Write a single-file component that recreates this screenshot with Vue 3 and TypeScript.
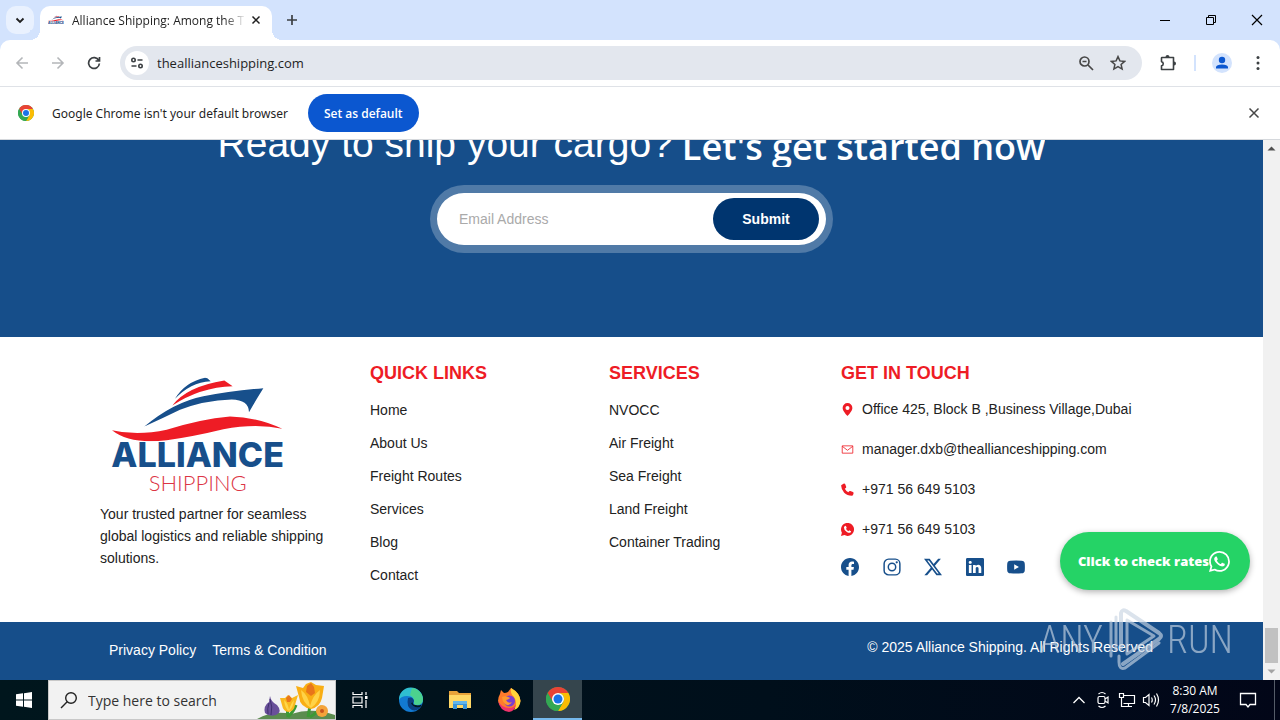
<script setup lang="ts">
import { ref } from 'vue'

interface ContactLine {
  icon: string
  text: string
  href: string
}

const address = ref('theallianceshipping.com')
const email = ref('')
const query = ref('')

const quickLinks: string[] = ['Home', 'About Us', 'Freight Routes', 'Services', 'Blog', 'Contact']
const services: string[] = ['NVOCC', 'Air Freight', 'Sea Freight', 'Land Freight', 'Container Trading']
const contacts: ContactLine[] = [
  { icon: 'i-pin', text: 'Office 425, Block B ,Business Village,Dubai', href: '#office' },
  { icon: 'i-mail', text: 'manager.dxb@theallianceshipping.com', href: '#mail' },
  { icon: 'i-phone', text: '+971 56 649 5103', href: '#phone' },
  { icon: 'i-wa-solid', text: '+971 56 649 5103', href: '#whatsapp' },
]
const socials: { icon: string; name: string }[] = [
  { icon: 'i-facebook', name: 'Facebook' },
  { icon: 'i-instagram', name: 'Instagram' },
  { icon: 'i-x', name: 'X' },
  { icon: 'i-linkedin', name: 'LinkedIn' },
  { icon: 'i-youtube', name: 'YouTube' },
]
</script>

<template>
  <div class="desktop">
    <svg class="defs" aria-hidden="true">
      <symbol id="i-ship" viewBox="66 80 516 192">
        <path fill="#174f8b" d="M255 145Q285 95 345 82L352 83L362 92Q300 96 255 145Z" />
        <path fill="#ee1c25" d="M247 165Q290 108 403 90L428 107Q330 110 247 165Z" />
        <path fill="#174f8b" d="M163 228Q250 155 340 137Q420 121 520 113Q498 148 477 185Q476 148 425 147Q340 150 270 178Q215 205 163 228Z" />
        <path fill="#ee1c25" d="M66 239Q140 257 230 238Q330 206 420 198Q505 200 577 235Q500 218 400 236Q310 258 230 269Q120 282 66 239Z" />
      </symbol>
      <symbol id="i-chrome" viewBox="0 0 48 48">
        <circle cx="24" cy="24" r="24" fill="#34a853" />
        <path fill="#ea4335" d="M3.2 12A24 24 0 0 1 44.8 12L24 13L14 30Z" />
        <path fill="#fbbc04" d="M44.8 12A24 24 0 0 1 24 48L34.4 30A12 12 0 0 0 24 12Z" />
        <path fill="#34a853" d="M3.2 12L13.6 30Q17 36 24 36L34.4 30L24 48A24 24 0 0 1 3.2 12Z" />
        <circle cx="24" cy="24" r="12" fill="#fff" />
        <circle cx="24" cy="24" r="9" fill="#1a73e8" />
      </symbol>
      <symbol id="i-wa" viewBox="0 0 16 16">
        <path fill="currentColor" d="M13.601 2.326A7.85 7.85 0 0 0 7.994 0C3.627 0 .068 3.558.064 7.926c0 1.399.366 2.76 1.057 3.965L0 16l4.204-1.102a7.9 7.9 0 0 0 3.79.965h.004c4.368 0 7.926-3.558 7.93-7.93A7.9 7.9 0 0 0 13.6 2.326zM7.994 14.521a6.6 6.6 0 0 1-3.356-.92l-.24-.144-2.494.654.666-2.433-.156-.251a6.56 6.56 0 0 1-1.007-3.505c0-3.626 2.957-6.584 6.591-6.584a6.56 6.56 0 0 1 4.66 1.931 6.56 6.56 0 0 1 1.928 4.66c-.004 3.639-2.961 6.592-6.592 6.592m3.615-4.934c-.197-.099-1.17-.578-1.353-.646-.182-.065-.315-.099-.445.099-.133.197-.513.646-.627.775-.114.133-.232.148-.43.05-.197-.1-.836-.308-1.592-.985-.59-.525-.985-1.175-1.103-1.372-.114-.198-.011-.304.088-.403.087-.088.197-.232.296-.346.1-.114.133-.198.198-.33.065-.134.034-.248-.015-.347-.05-.099-.445-1.076-.612-1.47-.16-.389-.323-.335-.445-.34-.114-.007-.247-.007-.38-.007a.73.73 0 0 0-.529.247c-.182.198-.691.677-.691 1.654s.71 1.916.81 2.049c.098.133 1.394 2.132 3.383 2.992.47.205.84.326 1.129.418.475.152.904.129 1.246.08.38-.058 1.171-.48 1.338-.943.164-.464.164-.86.114-.943-.049-.084-.182-.133-.38-.232" />
      </symbol>
      <symbol id="i-wa-solid" viewBox="0 0 16 16">
        <path fill="currentColor" d="M0 16L1.1 11.9A8 8 0 1 1 4.2 14.9Z" />
        <path fill="#fff" d="M4.2 4.2Q5.6 2.6 6.2 4L7 5.8Q7.1 6.4 6.1 7.1Q7.2 9.3 9.2 10Q9.9 8.9 10.5 9.1L12.3 10Q12.7 10.6 11.7 11.7Q10 12.7 7.2 11Q3.3 8.3 3.6 5.6Z" />
      </symbol>
      <symbol id="i-pin" viewBox="0 0 16 16">
        <path fill="currentColor" fill-rule="evenodd" d="M8 0a6 6 0 0 0-6 6c0 3.500 4 7.500 6 10 2-2.500 6-6.500 6-10a6 6 0 0 0-6-6zm0 3.600a2.500 2.500 0 1 1 0 5 2.500 2.500 0 0 1 0-5z" />
      </symbol>
      <symbol id="i-mail" viewBox="0 0 16 16">
        <path fill="none" stroke="currentColor" d="M1.500 3.500h13v9h-13zM1.500 4l6.500 5 6.500-5" />
      </symbol>
      <symbol id="i-phone" viewBox="0 0 16 16">
        <path fill="currentColor" d="M.6 2.600L3.600.6Q4.600.3 5.100 1.300L6.400 4.500Q6.600 5.400 5.900 6L4.700 7Q6.300 10 9 11.400L10.100 10.100Q10.700 9.500 11.500 9.800L14.700 11.100Q15.600 11.500 15.500 12.500L14.800 14.800Q14.400 15.700 13.400 15.700Q7.500 15.600 3.900 11.900Q.3 8.200.2 3.500Q.2 3 .6 2.600Z" />
      </symbol>
      <symbol id="i-facebook" viewBox="0 0 16 16">
        <path fill="currentColor" d="M16 8.049c0-4.446-3.582-8.050-8-8.050C3.580 0-.002 3.603-.002 8.050c0 4.017 2.926 7.347 6.750 7.951v-5.625h-2.030V8.050H6.750V6.275c0-2.017 1.195-3.131 3.022-3.131.876 0 1.791.157 1.791.157v1.980h-1.009c-.993 0-1.303.621-1.303 1.258v1.510h2.218l-.354 2.326H9.250V16c3.824-.604 6.750-3.934 6.750-7.951" />
      </symbol>
      <symbol id="i-instagram" viewBox="0 0 16 16">
        <rect x="1" y="1" width="14" height="14" rx="4" fill="none" stroke="currentColor" stroke-width="1.300" />
        <circle cx="8" cy="8" r="3.300" fill="none" stroke="currentColor" stroke-width="1.300" />
        <circle cx="12.200" cy="3.800" r="1" fill="currentColor" />
      </symbol>
      <symbol id="i-x" viewBox="0 0 16 16">
        <path fill="currentColor" d="M12.600.75h2.454l-5.360 6.142L16 15.250h-4.937l-3.867-5.070-4.425 5.070H.316l5.733-6.570L0 .75h5.063l3.495 4.633L12.601.75Zm-.86 13.028h1.360L4.323 2.145H2.865z" />
      </symbol>
      <symbol id="i-linkedin" viewBox="0 0 16 16">
        <path fill="currentColor" d="M0 1.146C0 .513.526 0 1.175 0h13.650C15.474 0 16 .513 16 1.146v13.708c0 .633-.526 1.146-1.175 1.146H1.175C.526 16 0 15.487 0 14.854zm4.943 12.248V6.169H2.542v7.225zm-1.200-8.212c.837 0 1.358-.554 1.358-1.248-.015-.709-.52-1.248-1.342-1.248S2.400 3.226 2.400 3.934c0 .694.521 1.248 1.327 1.248zm4.908 8.212V9.359c0-.216.016-.432.080-.586.173-.431.568-.878 1.232-.878.869 0 1.216.662 1.216 1.634v3.865h2.401V9.250c0-2.220-1.184-3.252-2.764-3.252-1.274 0-1.845.7-2.165 1.193v.025h-.016l.016-.025V6.169h-2.400c.030.678 0 7.225 0 7.225z" />
      </symbol>
      <symbol id="i-youtube" viewBox="0 0 16 16">
        <path fill="currentColor" fill-rule="evenodd" d="M3 2.400Q8 2 13 2.400Q15.600 2.600 15.800 5Q16 8 15.800 11Q15.600 13.400 13 13.600Q8 14 3 13.600Q.4 13.400.2 11Q0 8 .2 5Q.4 2.600 3 2.400ZM6.400 5.600V10.400L10.600 8Z" />
      </symbol>
    </svg>

    <header class="tabstrip">
      <button class="tab-search" aria-label="Search tabs">
        <svg width="12" height="12" viewBox="0 0 12 12"><path d="M2.500 4.500L6 8l3.500-3.500" fill="none" stroke="#1f1f1f" stroke-width="1.800" /></svg>
      </button>
      <div class="tab">
        <svg class="favicon" viewBox="66 80 516 350" aria-hidden="true">
          <use href="#i-ship" x="66" y="80" width="516" height="192" />
          <text class="logo-name" x="66" y="360">ALLIANCE</text>
        </svg>
        <span class="tab-title">Alliance Shipping: Among the T</span>
        <button class="tab-close" aria-label="Close tab">
          <svg width="10" height="10" viewBox="0 0 10 10"><path d="M1.500 1.500l7 7m0-7l-7 7" stroke="#1f1f1f" stroke-width="1.500" /></svg>
        </button>
      </div>
      <button class="new-tab" aria-label="New tab">
        <svg width="12" height="12" viewBox="0 0 12 12"><path d="M6 1v10M1 6h10" stroke="#3c4043" stroke-width="1.700" /></svg>
      </button>
      <div class="window-buttons">
        <button aria-label="Minimize"><svg width="12" height="12" viewBox="0 0 12 12"><path d="M1 6.500h10" stroke="#000" /></svg></button>
        <button aria-label="Restore"><svg width="12" height="12" viewBox="0 0 12 12"><path d="M1.500 3.500h7v7h-7zM3.500 3.500v-2h7v7h-2" fill="none" stroke="#000" /></svg></button>
        <button aria-label="Close"><svg width="12" height="12" viewBox="0 0 12 12"><path d="M1 1l10 10M11 1L1 11" stroke="#000" stroke-width="1.200" /></svg></button>
      </div>
    </header>

    <div class="toolbar-back">
      <nav class="toolbar" aria-label="Browser toolbar">
        <button aria-label="Back" disabled>
          <svg width="14" height="14" viewBox="0 0 14 14"><path d="M13 7H2m5.500-5.500L2 7l5.500 5.500" fill="none" stroke="#b4b6b9" stroke-width="1.600" /></svg>
        </button>
        <button aria-label="Forward" disabled>
          <svg width="14" height="14" viewBox="0 0 14 14"><path d="M1 7h11M6.500 1.500L12 7l-5.500 5.500" fill="none" stroke="#b4b6b9" stroke-width="1.600" /></svg>
        </button>
        <button aria-label="Reload">
          <svg width="14" height="14" viewBox="0 0 14 14"><path d="M11.800 4.500A5.400 5.400 0 1 0 12.400 7.500M12.500 1v4h-4" fill="none" stroke="#3c4043" stroke-width="1.700" /></svg>
        </button>
        <div class="omnibox">
          <button class="site-info" aria-label="View site information">
            <svg width="14" height="14" viewBox="0 0 14 14" fill="none" stroke="#3c4043" stroke-width="1.600"><circle cx="3.500" cy="4" r="1.700" /><circle cx="10.500" cy="10" r="1.700" /><path d="M7.500 4h5M1.500 10h5" /></svg>
          </button>
          <input v-model="address" class="address" type="text" aria-label="Address bar" />
          <button aria-label="Zoom">
            <svg width="16" height="16" viewBox="0 0 16 16" fill="none" stroke="#474747" stroke-width="1.700"><circle cx="6.500" cy="6.500" r="4.500" /><path d="M10 10l5 5M4.500 6.500h4" /></svg>
          </button>
          <button aria-label="Bookmark this page">
            <svg width="16" height="16" viewBox="0 0 16 16"><path d="M8 1.600l1.900 4.300 4.700.5-3.500 3.100 1 4.600L8 11.700l-4.100 2.400 1-4.600-3.500-3.100 4.700-.5z" fill="none" stroke="#474747" stroke-width="1.500" /></svg>
          </button>
        </div>
        <button class="extensions" aria-label="Extensions">
          <svg width="18" height="18" viewBox="0 0 18 18"><path d="M3 3.500h11.500v5.500v6.500H2.500v-3.600a2.200 2.200 0 0 0 0-4.300V4Q2.500 3.500 3 3.500z" fill="none" stroke="#3c4043" stroke-width="1.600" stroke-linejoin="round" /><path d="M6.500 3a2 2 0 0 1 4 0zM15 7.500a2 2 0 0 1 0 4z" fill="#3c4043" /></svg>
        </button>
        <span class="divider"></span>
        <button class="profile" aria-label="Profile">
          <svg width="20" height="20" viewBox="0 0 20 20"><circle cx="10" cy="10" r="10" fill="#d3e3fd" /><circle cx="10" cy="7" r="3.200" fill="#0b57d0" /><path d="M4 15.500v-1.500Q4.500 11.500 10 11.500T16 14v1.500z" fill="#0b57d0" /></svg>
        </button>
        <button class="menu" aria-label="Menu">
          <svg width="4" height="16" viewBox="0 0 4 16" fill="#3c4043"><circle cx="2" cy="2.500" r="1.500" /><circle cx="2" cy="8" r="1.500" /><circle cx="2" cy="13.500" r="1.500" /></svg>
        </button>
      </nav>
    </div>

    <section class="infobar" aria-label="Default browser">
      <svg width="16" height="16" aria-hidden="true"><use href="#i-chrome" /></svg>
      <span>Google Chrome isn't your default browser</span>
      <button class="set-default">Set as default</button>
      <button class="dismiss" aria-label="Dismiss">
        <svg width="12" height="12" viewBox="0 0 12 12"><path d="M1.500 1.500l9 9m0-9l-9 9" stroke="#474747" stroke-width="1.500" /></svg>
      </button>
    </section>

    <div class="viewport">
      <main class="page">
        <section class="hero">
          <h1 class="headline"><span>Ready to ship your cargo?</span><strong>Let's get started now</strong></h1>
          <form class="signup" @submit.prevent>
            <input v-model="email" type="email" placeholder="Email Address" aria-label="Email Address" />
            <button type="submit">Submit</button>
          </form>
        </section>

        <footer>
          <div class="columns">
            <div class="brand">
              <svg class="logo" viewBox="66 80 516 350" role="img" aria-label="Alliance Shipping">
                <use href="#i-ship" x="66" y="80" width="516" height="192" />
                <text class="logo-name" x="64" y="349">ALLIANCE</text>
                <text class="logo-sub" x="176" y="421">SHIPPING</text>
              </svg>
              <p>Your trusted partner for seamless global logistics and reliable shipping solutions.</p>
            </div>
            <nav aria-labelledby="quick">
              <h2 id="quick">QUICK LINKS</h2>
              <ul class="links">
                <li v-for="item in quickLinks" :key="item"><a href="#">{{ item }}</a></li>
              </ul>
            </nav>
            <nav aria-labelledby="services">
              <h2 id="services">SERVICES</h2>
              <ul class="links">
                <li v-for="item in services" :key="item"><a href="#">{{ item }}</a></li>
              </ul>
            </nav>
            <div>
              <h2>GET IN TOUCH</h2>
              <ul class="contacts">
                <li v-for="item in contacts" :key="item.icon">
                  <a :href="item.href"><svg width="13" height="13" aria-hidden="true"><use :href="'#' + item.icon" /></svg>{{ item.text }}</a>
                </li>
              </ul>
              <ul class="socials">
                <li v-for="item in socials" :key="item.name">
                  <a href="#" :aria-label="item.name"><svg width="18" height="18" aria-hidden="true"><use :href="'#' + item.icon" /></svg></a>
                </li>
              </ul>
            </div>
          </div>
          <div class="legal">
            <nav aria-label="Legal">
              <a href="#">Privacy Policy</a>
              <a href="#">Terms &amp; Condition</a>
            </nav>
            <p>© 2025 Alliance Shipping. All Rights Reserved</p>
          </div>
        </footer>
      </main>

      <div class="scrollbar" aria-hidden="true">
        <svg width="9" height="17" viewBox="0 0 9 17"><path d="M0.500 10.500h8l-4-4z" fill="#505050" /></svg>
        <span class="thumb"></span>
        <svg width="9" height="17" viewBox="0 0 9 17"><path d="M0.500 6.500h8l-4 4z" fill="#a3a3a3" /></svg>
      </div>

      <a class="rates" href="#rates">Click to check rates<svg width="21" height="21" aria-hidden="true"><use href="#i-wa" /></svg></a>

      <div class="watermark">
        <span>ANY</span>
        <svg width="56" height="64" viewBox="0 0 56 64" fill="none" stroke="currentColor" stroke-width="4" stroke-linejoin="round" stroke-linecap="round">
          <path d="M14 40V5Q15 1 19 3L52 25Q56 28 52 31L16 56" />
          <path d="M20 12V46L47 28L20 12M4 14V48M9 9V42" stroke-width="3" />
          <path d="M52 35L18 60Q12 62 12 54V48" stroke-width="3" />
        </svg>
        <span>RUN</span>
      </div>
    </div>

    <div class="taskbar">
      <button class="task start" aria-label="Start">
        <svg width="16" height="16" viewBox="0 0 16 16" fill="#fff"><path d="M0 2.300L7 1.300V7.500H0zM8 1.200L16 0V7.500H8zM0 8.500h7v6.200L0 13.700zM8 8.500h8V16L8 14.800z" /></svg>
      </button>
      <label class="search">
        <svg width="18" height="18" viewBox="0 0 18 18" fill="none" stroke="#222" stroke-width="1.400"><circle cx="11" cy="7" r="5.300" /><path d="M7.200 10.800L1 17" /></svg>
        <input v-model="query" type="text" placeholder="Type here to search" aria-label="Type here to search" />
        <svg class="flowers" width="78" height="38" viewBox="0 0 78 38" aria-hidden="true">
          <path d="M0 38Q16 29 34 33Q56 26 78 34V38Z" fill="#5b8c4f" />
          <path d="M31 36Q30 30 31 26M31 36Q37 30 39 24M51 36Q52 30 53 25M53 36Q60 32 65 25" fill="none" stroke="#3c9a35" stroke-width="3" />
          <path d="M13 15Q14 21 20 24Q26 31 19 34Q12 36 8 32Q6 25 12 21Z" fill="#69509a" />
          <path d="M13 18Q16 26 14 34M12 22Q10 28 11 33" fill="none" stroke="#40306f" />
          <path d="M23 17L28 17L31 14L35 17L41 14L38 24Q37 31 31 31Q26 30 25 24Z" fill="#f9b81d" />
          <path d="M27 19Q31 22 32 29Q34 22 37 19Q36 27 32 30Q28 28 27 19Z" fill="#ffd64a" />
          <path d="M39 5L46 7L49 3L54 1L59 4L67 5L65 17Q63 26 54 28Q43 26 42 16Z" fill="#f9ae14" />
          <path d="M44 9Q51 14 53 25Q56 14 63 9Q63 21 54 27Q45 22 44 9Z" fill="#ffd347" />
          <path d="M50 5L54 2L57 6L58 12L54 15L49 11Z" fill="#e8751a" />
          <path d="M29 17L32 14L35 18L33 21H30Z" fill="#e8751a" />
          <circle cx="65" cy="30" r="6" fill="#f4a33a" />
          <circle cx="65" cy="30" r="2" fill="#c8541d" />
        </svg>
      </label>
      <button class="task view" aria-label="Task View">
        <svg width="18" height="18" viewBox="0 0 18 18" fill="none" stroke="#fff" stroke-width="1.200"><path d="M2 1v2.500h9V1M2 17v-2.500h9V17M2 6h9v6H2zM15 1v3M15 9v8" /><path d="M14 5h2.500v3H14z" fill="#fff" stroke="none" /></svg>
      </button>
      <button class="task" aria-label="Edge">
        <svg width="26" height="26" viewBox="0 0 26 26">
          <circle cx="13" cy="13" r="12" fill="#127ad2" />
          <path d="M1 13A12 12 0 0 1 25 12Q25 18 18.500 18Q15 18 16 15Q16 9 9 9Q3 9 1 13Z" fill="#2fbed0" />
          <path d="M14 1A12 12 0 0 1 25 12Q25 18 18.500 18Q15 18 16 15Q17 11 12 8Z" fill="#57d778" opacity=".75" />
          <path d="M10 11Q15 9 16 14Q14 17 17 18Q21 20 24 18Q20 25 14 23Q8 20 10 11Z" fill="#0b3f82" />
          <path d="M15 15.500Q14 18 17 18Q20 19 24 17.500L22 20Q15 21 13 16Z" fill="#021820" />
        </svg>
      </button>
      <button class="task" aria-label="File Explorer">
        <svg width="22" height="20" viewBox="0 0 22 20"><path d="M0 1h8l2 2h12v15H0z" fill="#e8a33a" /><path d="M0 5h22v13H0z" fill="#ffd866" /><path d="M4 19v-8h14v8h-4v-4H8v4z" fill="#3a94d8" /><path d="M4 11h14v3H4z" fill="#62b5ea" /></svg>
      </button>
      <button class="task" aria-label="Firefox">
        <svg width="24" height="24" viewBox="0 0 24 24">
          <path d="M3 6L4 2L7 5Q9 5 11 4L14 0Q23 5 23.500 13A11.500 11 0 0 1 1 13Q1 9 3 6Z" fill="#ff7a2c" />
          <path d="M14 0Q23 5 23.500 13Q23 20 17 22Q21 15 17 9Q13 6 14 0Z" fill="#ffd43a" />
          <path d="M1 13Q5 20 12 20Q17 20 19 16Q18 23 12 24Q3 23 1 13Z" fill="#f0336b" />
          <circle cx="12.500" cy="13" r="5.500" fill="#7b3fd0" />
          <path d="M5 9Q9 7 13 10Q11 12 9 12Q11 16 15 14Q12 19 8 16Q5 13 5 9Z" fill="#ff9a2e" />
        </svg>
      </button>
      <button class="task active" aria-label="Chrome">
        <svg width="24" height="24"><use href="#i-chrome" /></svg>
      </button>
      <div class="tray">
        <button aria-label="Show hidden icons"><svg width="14" height="14" viewBox="0 0 14 14"><path d="M1.500 10L7 4.500l5.500 5.500" fill="none" stroke="#fff" stroke-width="1.300" /></svg></button>
        <button aria-label="Meet Now"><svg width="14" height="18" viewBox="0 0 14 18" fill="none" stroke="#fff" stroke-width="1.200"><rect x="2" y="5.500" width="7" height="7" rx="1.500" /><path d="M9 8l3-2v6L9 10M2.500 3Q6 0 9.500 3M2.500 15Q6 18 9.500 15" /></svg></button>
        <button aria-label="Network"><svg width="18" height="16" viewBox="0 0 18 16" fill="none" stroke="#fff" stroke-width="1.200"><path d="M5 3.500h11.500v8H5.500M10.500 11.500v3M7 14.500h7M1.500 1.500h4v4h-4zM3.500 5.500v9H7" /></svg></button>
        <button aria-label="Volume"><svg width="18" height="16" viewBox="0 0 18 16" fill="none" stroke="#fff" stroke-width="1.200"><path d="M1.500 5.500h2l3.500-3v11l-3.500-3h-2zM9.500 5.500q1.500 2.500 0 5M12 3.500q3 4.500 0 9M14.500 1.500q4 6.500 0 13" /></svg></button>
        <time class="clock"><span>8:30 AM</span><span>7/8/2025</span></time>
        <button class="notify" aria-label="Notifications"><svg width="18" height="18" viewBox="0 0 18 18"><path d="M1.500 2.500h15v11H11L9 16l-2-2.500H1.500z" fill="none" stroke="#fff" stroke-width="1.300" /></svg></button>
      </div>
    </div>
  </div>
</template>

<style>
html,
body {
  margin: 0;
  overflow: hidden;
}
</style>

<style scoped>
.desktop {
  display: flex;
  flex-direction: column;
  height: 100vh;
  font-family: "Open Sans", sans-serif;
  font-size: 12px;
  color: #1f1f1f;
}

.defs {
  position: absolute;
  width: 0;
  height: 0;
}

svg {
  display: block;
  flex: none;
}

button {
  display: flex;
  align-items: center;
  justify-content: center;
  border: 0;
  padding: 0;
  background: none;
  font: inherit;
  color: inherit;
}

input {
  border: 0;
  outline: 0;
  padding: 0;
  background: none;
  font: inherit;
  color: inherit;
  min-width: 0;
  flex: 1;
}

ul,
p,
h1,
h2 {
  margin: 0;
  padding: 0;
  list-style: none;
}

a {
  color: inherit;
  text-decoration: none;
}

.tabstrip {
  flex: none;
  display: flex;
  align-items: flex-start;
  height: 34px;
  padding: 6px 0 0 6px;
  background: #d3e3fd;
}

.tab-search {
  width: 28px;
  height: 28px;
  margin-right: 6px;
  border-radius: 10px;
  background: #e9f1fe;
}

.tab {
  position: relative;
  display: flex;
  align-items: center;
  width: 232px;
  height: 34px;
  box-sizing: border-box;
  padding: 0 8px;
  border-radius: 10px 10px 0 0;
  background: #fff;
}

.tab::before,
.tab::after {
  content: "";
  position: absolute;
  bottom: 0;
  width: 10px;
  height: 10px;
}

.tab::before {
  right: 100%;
  background: radial-gradient(circle at 0 0, #d3e3fd 10px, #fff 10px);
}

.tab::after {
  left: 100%;
  background: radial-gradient(circle at 100% 0, #d3e3fd 10px, #fff 10px);
}

.favicon {
  width: 16px;
  height: 14px;
  margin: 0 8px 4px 0;
}

.tab-title {
  flex: 1;
  overflow: hidden;
  white-space: nowrap;
  margin-bottom: 6px;
  mask-image: linear-gradient(90deg, #000 152px, transparent 174px);
}

.tab-close {
  width: 16px;
  height: 16px;
  margin: 0 0 6px 4px;
}

.new-tab {
  width: 28px;
  height: 28px;
  margin-left: 6px;
}

.window-buttons {
  display: flex;
  margin-left: auto;
}

.window-buttons button {
  width: 46px;
  height: 28px;
}

.toolbar-back {
  flex: none;
  background: #d3e3fd;
}

.toolbar {
  display: flex;
  align-items: center;
  height: 46px;
  padding: 0 10px 0 4px;
  border-bottom: 1px solid #dfe2e7;
  border-radius: 10px 10px 0 0;
  background: #fff;
}

.toolbar > button {
  width: 36px;
  height: 34px;
}

.omnibox {
  flex: 1;
  display: flex;
  align-items: center;
  height: 34px;
  margin: 0 8px;
  padding: 0 8px 0 5px;
  border-radius: 17px;
  background: #e3e7ee;
}

.omnibox button {
  width: 32px;
  height: 24px;
}

.omnibox .site-info {
  width: 24px;
  border-radius: 12px;
  background: #fff;
}

.address {
  margin-left: 8px;
  font-size: 13px;
}

.divider {
  width: 2px;
  height: 16px;
  margin: 0 8px;
  background: #d3e3fd;
}

.toolbar > .menu {
  width: 24px;
  margin-left: 6px;
}

.infobar {
  flex: none;
  display: flex;
  align-items: center;
  height: 52px;
  padding: 0 20px 0 18px;
  border-bottom: 1px solid #d5d8dc;
  background: #fff;
}

.infobar span {
  margin: 0 20px 0 18px;
  font-family: "Noto Sans", sans-serif;
}

.set-default {
  height: 38px;
  padding: 0 16px;
  border-radius: 19px;
  background: #0b57d0;
  color: #fff;
  font-weight: 600;
}

.dismiss {
  margin-left: auto;
}

.viewport {
  position: relative;
  flex: 1;
  min-height: 0;
  display: flex;
  overflow: hidden;
}

.page {
  flex: 1;
  display: flex;
  flex-direction: column;
  justify-content: flex-end;
  overflow: hidden;
  background: #164e8a;
  font-family: "Liberation Sans", Arial, sans-serif;
  font-size: 14px;
}

.hero {
  flex: none;
  display: flex;
  flex-direction: column;
  align-items: center;
  padding-bottom: 84px;
  color: #fff;
}

.headline {
  display: flex;
  align-items: flex-end;
  gap: 9px;
  margin-bottom: 18px;
  font-size: 39px;
  font-weight: 400;
  line-height: 46px;
  white-space: nowrap;
}

.headline strong {
  overflow: hidden;
  font-family: "Open Sans", sans-serif;
  font-size: 36px;
  font-weight: 600;
  line-height: 40px;
}

.signup {
  display: flex;
  align-items: center;
  width: 389px;
  height: 52px;
  border: 8px solid #507aa7;
  border-right-width: 7px;
  border-left-width: 7px;
  border-radius: 34px;
  background: #fff;
}

.signup input {
  align-self: stretch;
  padding-left: 22px;
  border-radius: 26px;
  color: #333;
}

.signup input::placeholder {
  color: #aaa;
  opacity: 1;
}

.signup button {
  width: 106px;
  height: 42px;
  margin-right: 7px;
  border-radius: 21px;
  background: #00356f;
  font-weight: 700;
}

footer {
  flex: none;
  background: #fff;
  color: #222;
}

.columns {
  display: grid;
  grid-template-columns: 270fr 239fr 232fr 322fr;
  height: 260px;
  padding: 25px 100px 0;
}

.brand p {
  width: 240px;
  margin-top: 9px;
  line-height: 22px;
}

.logo {
  width: 172px;
  height: 117px;
  margin: 15px 0 0 12px;
  overflow: visible;
}

.logo-name {
  fill: #174f8b;
  font-family: Inter, sans-serif;
  font-size: 102px;
  font-weight: 800;
}

.logo-sub {
  fill: #dc3545;
  font-family: Lato, sans-serif;
  font-size: 66px;
  font-weight: 300;
}

h2 {
  color: #ee1c25;
  font-size: 18px;
  line-height: 22px;
}

.links {
  margin-top: 10px;
  line-height: 33px;
}

.contacts {
  margin-top: 5px;
  line-height: 40px;
}

.contacts a {
  display: flex;
  align-items: center;
  gap: 8px;
  white-space: nowrap;
}

.contacts svg {
  color: #ee1c25;
}

.socials {
  display: flex;
  justify-content: space-between;
  width: 184px;
  margin-top: 9px;
  color: #174f8b;
}

.legal {
  display: flex;
  align-items: center;
  justify-content: space-between;
  height: 56px;
  padding: 0 110px 2px 109px;
  background: #164e8a;
  color: #fff;
}

.legal nav {
  display: flex;
  gap: 16px;
}

.legal p {
  margin-bottom: 6px;
}

.scrollbar {
  width: 17px;
  display: flex;
  flex-direction: column;
  align-items: center;
  background: #f1f1f1;
}

.thumb {
  width: 13px;
  height: 35px;
  margin-top: auto;
  background: #c1c1c1;
}

.rates {
  position: absolute;
  right: 30px;
  bottom: 90px;
  display: flex;
  align-items: center;
  height: 58px;
  padding: 0 20px 0 18px;
  border-radius: 29px;
  background: #25d366;
  box-shadow: 0 2px 6px rgba(0, 0, 0, 0.3);
  color: #fff;
  font-size: 13px;
  font-weight: 800;
}

.watermark {
  position: absolute;
  right: 47px;
  bottom: 8px;
  display: flex;
  align-items: center;
  gap: 4px;
  color: #c9d5e3;
  opacity: 0.65;
  font-family: "Liberation Sans Narrow", "Roboto Condensed", Roboto, sans-serif;
  font-size: 38px;
  font-weight: 300;
  pointer-events: none;
}

.taskbar {
  flex: none;
  display: flex;
  height: 40px;
  background: linear-gradient(90deg, #00161d, #000f1b 60%, #020618);
  color: #fff;
}

.task {
  width: 49px;
}

.task.start {
  width: 48px;
}

.task.view {
  width: 48px;
  margin-right: 2px;
}

.task.active {
  border-bottom: 2px solid #76b9ed;
  background: #35454d;
}

.search {
  display: flex;
  align-items: center;
  width: 288px;
  box-sizing: border-box;
  padding-left: 11px;
  border: 1px solid #c8c8c8;
  background: #f2f2f2;
  font-size: 14px;
}

.search input {
  margin-left: 10px;
}

.search input::placeholder {
  color: #333;
  opacity: 1;
}

.tray {
  display: flex;
  align-items: stretch;
  margin-left: auto;
  padding-right: 5px;
}

.tray button {
  width: 24px;
}

.clock {
  display: flex;
  flex-direction: column;
  align-items: center;
  justify-content: center;
  width: 64px;
  line-height: 18px;
}

.tray .notify {
  width: 48px;
  padding-right: 6px;
  border-right: 1px solid #555c68;
}
</style>
